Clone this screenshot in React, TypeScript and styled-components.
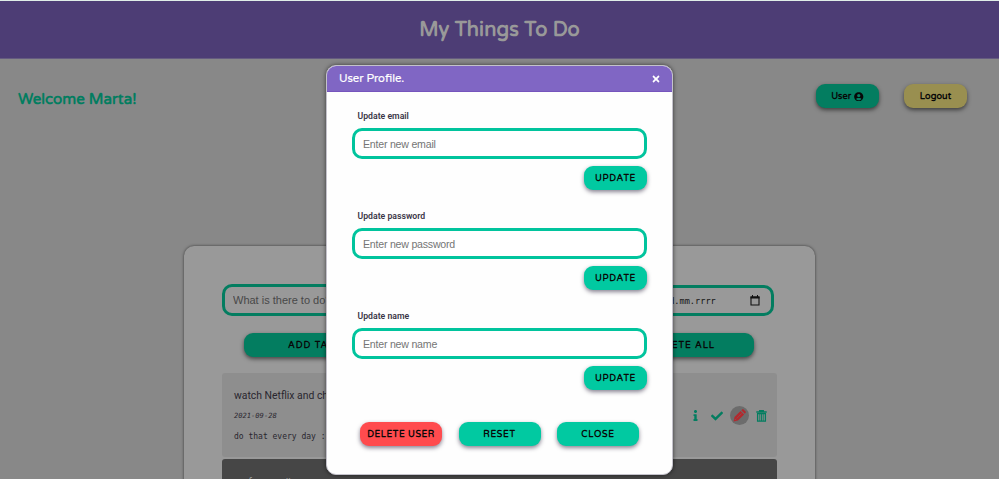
import React from "react";
import styled, { createGlobalStyle } from "styled-components";
import { FaCheck, FaInfo, FaTimes, FaUserCircle } from "react-icons/fa";

const round = `"Varela Round", "Open Sans", sans-serif`;
const arial = `"Liberation Sans", Arial, sans-serif`;
const mono = `"DejaVu Sans Mono", monospace`;

const GlobalStyle = createGlobalStyle`
  * { box-sizing: border-box; }
  body { margin: 0; background: #fff; overflow: hidden; }
  button, input { margin: 0; font: inherit; }
`;

const Page = styled.div`
  width: 999px;
  height: 479px;
  overflow: hidden;
  background: #888;
  border-top: 1px solid #e0eee8;
  font-family: ${round};
`;

const Header = styled.header`
  height: 58px;
  display: flex;
  align-items: center;
  justify-content: center;
  background: #4d3d75;
  border-bottom: 1px solid #655b80;
`;

const Title = styled.h1`
  margin: 0;
  font-size: 20px;
  line-height: 26px;
  font-weight: 700;
  letter-spacing: 0.1px;
  color: #999;
`;

const TopBar = styled.div`
  height: 187px;
  padding: 25px 32px 0 18px;
  display: flex;
  justify-content: space-between;
  align-items: flex-start;
`;

const Welcome = styled.h2`
  margin: 4px 0 0;
  font-size: 15.2px;
  line-height: 22px;
  font-weight: 700;
  color: #037d60;
`;

const Actions = styled.div`
  display: flex;
  gap: 25px;
`;

const Button = styled.button<{ $w: number; $h?: number; $bg?: string; $size?: number; $spacing?: number; $dim?: boolean }>`
  width: ${(p) => p.$w}px;
  height: ${(p) => p.$h ?? 24}px;
  padding: 1px 0 0;
  border: 0;
  border-radius: 9px;
  display: flex;
  flex: none;
  align-items: center;
  justify-content: center;
  gap: 3px;
  background: ${(p) => p.$bg ?? "#01c9a1"};
  box-shadow: 0 2px 4px ${(p) => (p.$dim ? "rgba(0,0,0,.55)" : "rgba(20,10,40,.5)")};
  font-family: ${round};
  font-size: ${(p) => p.$size ?? 9}px;
  font-weight: 700;
  letter-spacing: ${(p) => p.$spacing ?? 0.7}px;
  color: #080808;
  white-space: nowrap;
`;

const Card = styled.main`
  width: 631px;
  height: 300px;
  margin-left: 184px;
  padding: 38px 38px 0;
  border-radius: 10px;
  background: #999;
  box-shadow: 0 0 3px rgba(0, 0, 0, 0.6);
`;

const InputRow = styled.div`
  display: flex;
  justify-content: space-between;
  padding-right: 3px;
`;

const TaskInput = styled.input`
  width: 330px;
  height: 32px;
  padding: 0 8px 1px;
  border: 3px solid #037d60;
  border-radius: 10px;
  background: transparent;
  font: 11px ${arial};
  &::placeholder { color: #484848; opacity: 1; }
`;

const DateField = styled.div`
  width: 124px;
  height: 31px;
  margin-top: 1px;
  padding: 0 11px;
  display: flex;
  align-items: center;
  justify-content: space-between;
  border: 3px solid #037d60;
  border-radius: 10px;
  font: 8.6px ${mono};
  color: #151515;
`;

const TaskButtons = styled.div`
  display: flex;
  justify-content: space-between;
  padding: 17px 23px 0 22px;
`;

const Task = styled.article<{ $dark?: boolean }>`
  height: 84px;
  margin-top: ${(p) => (p.$dark ? 2 : 16)}px;
  padding: ${(p) => (p.$dark ? 17 : 16)}px 4px 0 12px;
  display: flex;
  justify-content: space-between;
  border-radius: 3px;
  background: ${(p) => (p.$dark ? "#464646" : "#8e8e8e")};
  color: ${(p) => (p.$dark ? "#999" : "#29262f")};
`;

const TaskName = styled.p`
  margin: 0 0 8px;
  font: 10.4px/13px Roboto, sans-serif;
`;

const TaskDate = styled.p`
  margin: 0 0 10px;
  font: italic 7.1px/12px ${mono};
`;

const TaskNote = styled.p`
  margin: 0;
  font: 8px/10px ${mono};
`;

const TaskIcons = styled.div`
  height: 53px;
  display: flex;
  align-items: center;
  color: #037d60;
`;

const IconSlot = styled.span<{ $w: number; $disc?: boolean }>`
  width: ${(p) => p.$w}px;
  height: 19px;
  display: flex;
  align-items: center;
  justify-content: center;
  border-radius: 50%;
  background: ${(p) => (p.$disc ? "#6c6c6c" : "transparent")};
`;

const Modal = styled.section`
  position: absolute;
  left: 326px;
  top: 65px;
  width: 347px;
  height: 410px;
  overflow: hidden;
  border: 1px solid #c4c2cb;
  border-radius: 10px;
  background: #fefefe;
  box-shadow: 0 0 4px rgba(0, 0, 0, 0.6);
  font-family: ${round};
`;

const ModalHeader = styled.header`
  height: 26px;
  padding: 1px 11px 0 12px;
  display: flex;
  align-items: center;
  justify-content: space-between;
  background: #8066c4;
  border-bottom: 1px solid #7655bd;
  color: #fff;
`;

const ModalTitle = styled.h3`
  margin: 0 0 2px;
  font-size: 11.3px;
  font-weight: 500;
  -webkit-text-stroke: 0.2px #fff;
`;

const Fields = styled.div`
  padding: 17px 25px 0;
`;

const Field = styled.div`
  height: 100.2px;
  display: flex;
  flex-direction: column;
  align-items: flex-end;
`;

const Label = styled.label`
  align-self: flex-start;
  margin: 0 0 4px 5.5px;
  font: 600 8.7px/15px Roboto, sans-serif;
  color: #3b3748;
`;

const ModalInput = styled.input`
  width: 295px;
  height: 31px;
  flex: none;
  margin-bottom: 7px;
  padding: 0 8px;
  border: 3px solid #01c49d;
  border-radius: 10px;
  background: #fff;
  font: 10.6px ${arial};
  letter-spacing: -0.22px;
  &::placeholder { color: #757575; opacity: 1; }
`;

const Footer = styled.footer`
  padding: 12px 33px 0;
  display: flex;
  justify-content: space-between;
`;

const fields = ["email", "password", "name"];

const CalendarIcon = () => (
  <svg width="10" height="11" viewBox="0 0 10 11">
    <path d="M1 2h8v8H1z" fill="none" stroke="#111" strokeWidth="1.1" />
    <path d="M.5 1.5h9v2h-9zM2 0h1v2H2zM7 0h1v2H7z" fill="#111" />
  </svg>
);

const PencilIcon = () => (
  <svg width="13" height="13" viewBox="0 0 13 13">
    <path d="M.6 12.4l.9-4.4L7.6 1.9l3.5 3.5L5 11.5zM8.3 1.2l.9-.8q.7-.6 1.4 0l2 2q.6.7 0 1.4l-.8.9z" fill="#b3282d" />
    <path d="M3.6 9.4l5-5" stroke="#6c6c6c" strokeWidth=".5" />
    <path d="M1.9 10.1l1 1" stroke="#6c6c6c" strokeWidth=".8" />
  </svg>
);

const TrashIcon = () => (
  <svg width="11" height="12" viewBox="0 0 11 12" fill="none" stroke="#037d60">
    <path d="M.3 2h10.4M3.7 1.6V.7h3.6v.9" strokeWidth="1.3" />
    <path d="M1.6 3.6h7.8v7.6H1.6z" strokeWidth="1.3" />
    <path d="M3.8 4v7M5.5 4v7M7.2 4v7" strokeWidth=".9" />
  </svg>
);

export default function App() {
  return (
    <>
      <GlobalStyle />
      <Page>
        <Header><Title>My Things To Do</Title></Header>
        <TopBar>
          <Welcome>Welcome Marta!</Welcome>
          <Actions>
            <Button $w={63} $bg="#037d60" $size={9.1} $spacing={0.05} $dim>User <FaUserCircle size={9.5} /></Button>
            <Button $w={63} $bg="#998f50" $size={9.1} $spacing={0.1} $dim>Logout</Button>
          </Actions>
        </TopBar>
        <Card>
          <InputRow>
            <TaskInput placeholder="What is there to do?" />
            <DateField><span>dd.mm.rrrr</span><CalendarIcon /></DateField>
          </InputRow>
          <TaskButtons>
            <Button $w={142} $bg="#037d60" $size={9.1} $spacing={0.95} $dim>ADD TASK</Button>
            <Button $w={142} $bg="#037d60" $size={9.1} $spacing={0.95} $dim>DELETE ALL</Button>
          </TaskButtons>
          <Task>
            <div>
              <TaskName>watch Netflix and chill</TaskName>
              <TaskDate>2021-09-28</TaskDate>
              <TaskNote>do that every day :)</TaskNote>
            </div>
            <TaskIcons>
              <IconSlot $w={21}><FaInfo size={11} /></IconSlot>
              <IconSlot $w={22}><FaCheck size={12} /></IconSlot>
              <IconSlot $w={2} />
              <IconSlot $w={19} $disc><PencilIcon /></IconSlot>
              <IconSlot $w={24}><TrashIcon /></IconSlot>
            </TaskIcons>
          </Task>
          <Task $dark><TaskName>go for a walk</TaskName></Task>
        </Card>
      </Page>
      <Modal>
        <ModalHeader><ModalTitle>User Profile.</ModalTitle><FaTimes size={10} /></ModalHeader>
        <Fields>
          {fields.map((name) => (
            <Field key={name}>
              <Label>Update {name}</Label>
              <ModalInput placeholder={`Enter new ${name}`} />
              <Button $w={63} $h={23.5}>UPDATE</Button>
            </Field>
          ))}
        </Fields>
        <Footer>
          <Button $w={82} $bg="#ff4b4e" $spacing={0.55}>DELETE USER</Button>
          <Button $w={82}>RESET</Button>
          <Button $w={82}>CLOSE</Button>
        </Footer>
      </Modal>
    </>
  );
}
